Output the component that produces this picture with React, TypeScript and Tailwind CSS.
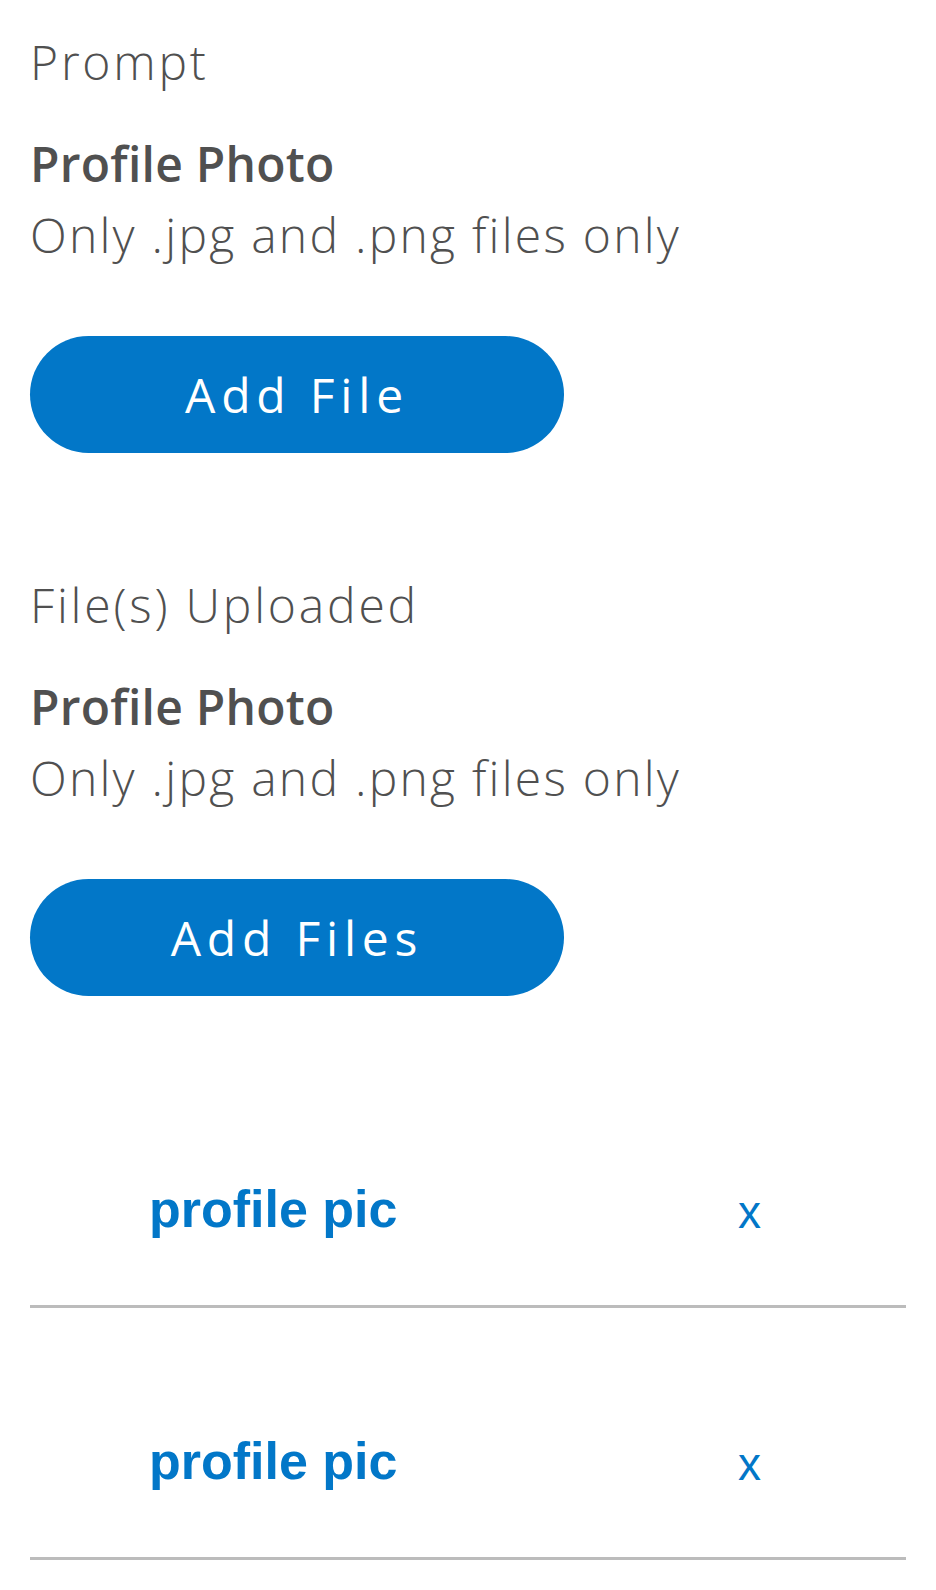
import React from "react";

const sans = { fontFamily: "'Open Sans', 'Noto Sans', sans-serif" };
const arial = { fontFamily: "'Liberation Sans', Arial, sans-serif" };

function Section({ title, button, gap }: { title: string; button: string; gap: string }) {
  return (
    <div className={`flex flex-col ${gap}`}>
      <div className="text-[48px] leading-[56px] font-light text-[#505050] tracking-[2.8px]">{title}</div>
      <div className="mt-[46px] text-[48px] leading-[56px] font-semibold text-[#505050] tracking-[0.25px]">
        Profile Photo
      </div>
      <div className="mt-[15px] text-[48px] leading-[56px] font-light text-[#505050] tracking-[2.25px]">
        Only .jpg and .png files only
      </div>
      <button className="mt-[73px] h-[117px] w-[534px] rounded-full bg-[#0277c8] text-white text-[48px] leading-[56px] font-normal tracking-[5.8px] flex items-center justify-center">
        {button}
      </button>
    </div>
  );
}

function Row() {
  return (
    <div className="h-[252px] border-b-[3px] border-[#bcbcbc] flex items-start pt-[123px]">
      <div className="w-[708px] pl-[119px] text-[52px] leading-[60px] font-bold text-[#0277c8]" style={arial}>
        profile pic
      </div>
      <div className="mt-[3px] text-[46px] leading-[60px] text-[#0277c8]" style={arial}>
        x
      </div>
    </div>
  );
}

export default function App() {
  return (
    <div className="w-[936px] min-h-[1590px] bg-white px-[30px] pt-[34px]" style={sans}>
      <Section title="Prompt" button="Add File" gap="" />
      <Section title="File(s) Uploaded" button="Add Files" gap="mt-[124px]" />
      <div className="mt-[60px]">
        <Row />
        <Row />
      </div>
    </div>
  );
}
